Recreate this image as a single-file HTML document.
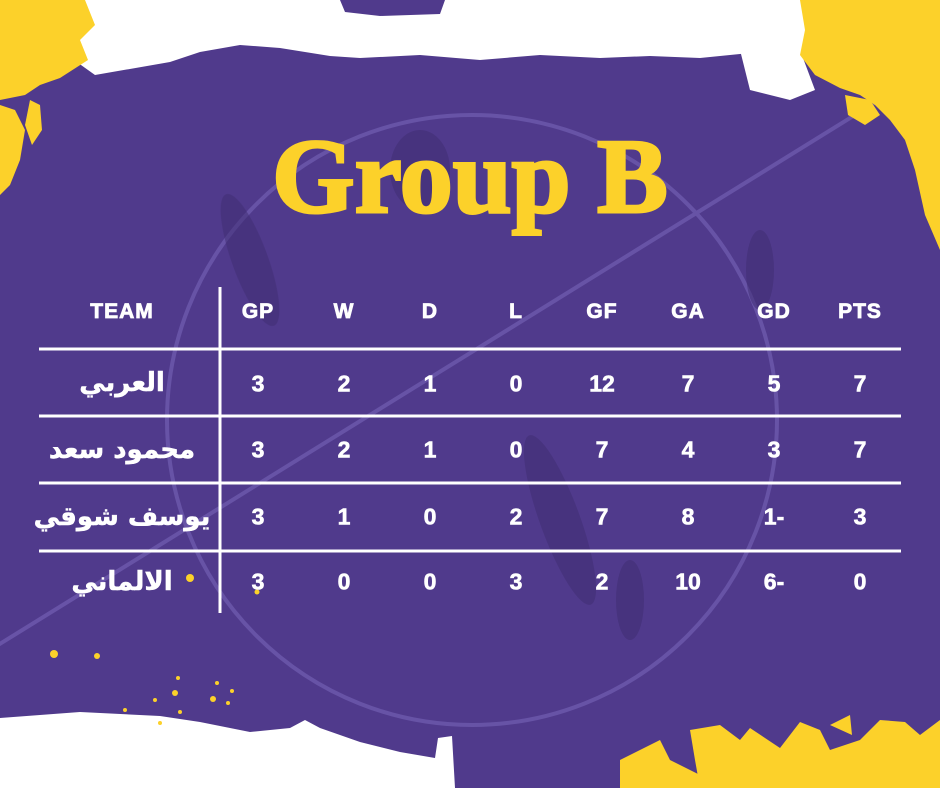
<!DOCTYPE html>
<html><head><meta charset="utf-8"><style>
html,body{margin:0;padding:0}
body{width:940px;height:788px;overflow:hidden;background:#503a8c;position:relative;font-family:"Liberation Sans","DejaVu Sans",sans-serif}
svg{position:absolute;left:0;top:0}
.t{position:absolute;color:#fff;font-weight:bold;text-align:center;transform:translate(-50%,-50%);white-space:nowrap}
.h{font-size:21px;letter-spacing:1px;-webkit-text-stroke:0.8px #fff}
.n{font-size:23px;-webkit-text-stroke:0.6px #fff}
.a{font-size:26px;font-family:"DejaVu Sans","Noto Sans CJK SC",sans-serif;-webkit-text-stroke:0.5px #fff}
.title{position:absolute;left:270px;top:116px;width:400px;text-align:center;font-family:"Liberation Serif",serif;font-weight:bold;font-size:106px;color:#fcd12a;-webkit-text-stroke:3px #fcd12a;letter-spacing:0px}
</style></head><body>
<svg width="940" height="788" viewBox="0 0 940 788">
 <g fill="none" stroke="#6c58ab" stroke-width="4" opacity="0.85">
  <circle cx="472" cy="420" r="305"/>
  <line x1="960" y1="50" x2="-10" y2="650"/>
 </g>
 <g fill="#3f2d70" opacity="0.5">
  <ellipse cx="250" cy="260" rx="18" ry="70" transform="rotate(-20 250 260)"/>
  <ellipse cx="760" cy="270" rx="14" ry="40"/>
  <ellipse cx="560" cy="520" rx="20" ry="90" transform="rotate(-20 560 520)"/>
  <ellipse cx="630" cy="600" rx="14" ry="40"/>
  <ellipse cx="420" cy="170" rx="30" ry="40"/>
 </g>
 <path fill="#fff" d="M60 0 H340 L345 12 L380 16 L440 14 L445 0 H830 L835 40 L800 55 L760 52 L700 58 L650 56 L600 58 L540 55 L480 60 L420 55 L360 58 L330 56 L280 48 L240 45 L200 52 L170 62 L95 75 L60 50 Z"/>
 <path fill="#fff" d="M740 50 L800 50 L815 90 L790 100 L750 90 Z"/>
 <path fill="#fcd12a" d="M0 0 H85 L95 25 L80 40 L88 60 L60 78 L40 85 L25 95 L0 100 Z"/>
 <path fill="#fcd12a" d="M0 105 L15 110 L25 130 L20 160 L10 185 L0 195 Z"/>
 <path fill="#fcd12a" d="M30 100 L40 105 L42 130 L32 145 L25 125 Z"/>
 <path fill="#fcd12a" d="M800 0 H940 V250 L925 215 L915 170 L905 140 L890 120 L875 105 L860 95 L840 88 L815 75 L800 55 L805 30 Z"/>
 <path fill="#fcd12a" d="M845 95 L870 100 L880 115 L865 125 L848 115 Z"/>
 <path fill="#fff" d="M0 718 L80 712 L160 716 L200 722 L250 732 L290 728 L305 720 L320 728 L360 742 L400 752 L435 758 L438 738 L452 736 L455 788 H0 Z"/>
 <path fill="#fcd12a" d="M620 760 L660 740 L670 760 L700 775 L720 788 H620 Z"/>
 <path fill="#fcd12a" d="M690 730 L720 725 L740 740 L750 728 L780 748 L800 722 L820 730 L830 750 L860 740 L880 720 L905 722 L920 735 L940 720 V788 H700 L695 760 Z"/>
 <path fill="#fcd12a" d="M830 725 L850 715 L852 735 Z"/>
 <g fill="#fcd12a">
  <circle cx="190" cy="578" r="4"/><circle cx="257" cy="592" r="2.5"/><circle cx="97" cy="656" r="3"/>
  <circle cx="54" cy="654" r="4"/><circle cx="125" cy="710" r="2"/><circle cx="175" cy="693" r="3"/>
  <circle cx="155" cy="700" r="2"/><circle cx="213" cy="699" r="3"/><circle cx="180" cy="712" r="2"/>
  <circle cx="178" cy="678" r="2"/><circle cx="232" cy="691" r="2"/><circle cx="217" cy="683" r="2"/>
  <circle cx="228" cy="703" r="2"/><circle cx="160" cy="723" r="2"/>
 </g>
</svg>
<div class="title">Group B</div>
<svg width="940" height="788">
 <g stroke="#fff" stroke-width="3">
  <line x1="220" y1="287" x2="220" y2="613"/>
  <line x1="39" y1="349" x2="901" y2="349"/>
  <line x1="39" y1="416" x2="901" y2="416"/>
  <line x1="39" y1="483" x2="901" y2="483"/>
  <line x1="39" y1="551" x2="901" y2="551"/>
 </g>
</svg>
<div class="t h" style="left:122px;top:312px">TEAM</div>
<div class="t h" style="left:258px;top:312px">GP</div>
<div class="t h" style="left:344px;top:312px">W</div>
<div class="t h" style="left:430px;top:312px">D</div>
<div class="t h" style="left:516px;top:312px">L</div>
<div class="t h" style="left:602px;top:312px">GF</div>
<div class="t h" style="left:688px;top:312px">GA</div>
<div class="t h" style="left:774px;top:312px">GD</div>
<div class="t h" style="left:860px;top:312px">PTS</div>

<div class="t a" style="left:122px;top:383px">العربي</div>
<div class="t n" style="left:258px;top:384px">3</div><div class="t n" style="left:344px;top:384px">2</div><div class="t n" style="left:430px;top:384px">1</div><div class="t n" style="left:516px;top:384px">0</div><div class="t n" style="left:602px;top:384px">12</div><div class="t n" style="left:688px;top:384px">7</div><div class="t n" style="left:774px;top:384px">5</div><div class="t n" style="left:860px;top:384px">7</div>

<div class="t a" style="left:122px;top:450px">محمود سعد</div>
<div class="t n" style="left:258px;top:450px">3</div><div class="t n" style="left:344px;top:450px">2</div><div class="t n" style="left:430px;top:450px">1</div><div class="t n" style="left:516px;top:450px">0</div><div class="t n" style="left:602px;top:450px">7</div><div class="t n" style="left:688px;top:450px">4</div><div class="t n" style="left:774px;top:450px">3</div><div class="t n" style="left:860px;top:450px">7</div>

<div class="t a" style="left:122px;top:517px">يوسف شوقي</div>
<div class="t n" style="left:258px;top:517px">3</div><div class="t n" style="left:344px;top:517px">1</div><div class="t n" style="left:430px;top:517px">0</div><div class="t n" style="left:516px;top:517px">2</div><div class="t n" style="left:602px;top:517px">7</div><div class="t n" style="left:688px;top:517px">8</div><div class="t n" style="left:774px;top:517px">1-</div><div class="t n" style="left:860px;top:517px">3</div>

<div class="t a" style="left:122px;top:582px">الالماني</div>
<div class="t n" style="left:258px;top:582px">3</div><div class="t n" style="left:344px;top:582px">0</div><div class="t n" style="left:430px;top:582px">0</div><div class="t n" style="left:516px;top:582px">3</div><div class="t n" style="left:602px;top:582px">2</div><div class="t n" style="left:688px;top:582px">10</div><div class="t n" style="left:774px;top:582px">6-</div><div class="t n" style="left:860px;top:582px">0</div>
</body></html>
